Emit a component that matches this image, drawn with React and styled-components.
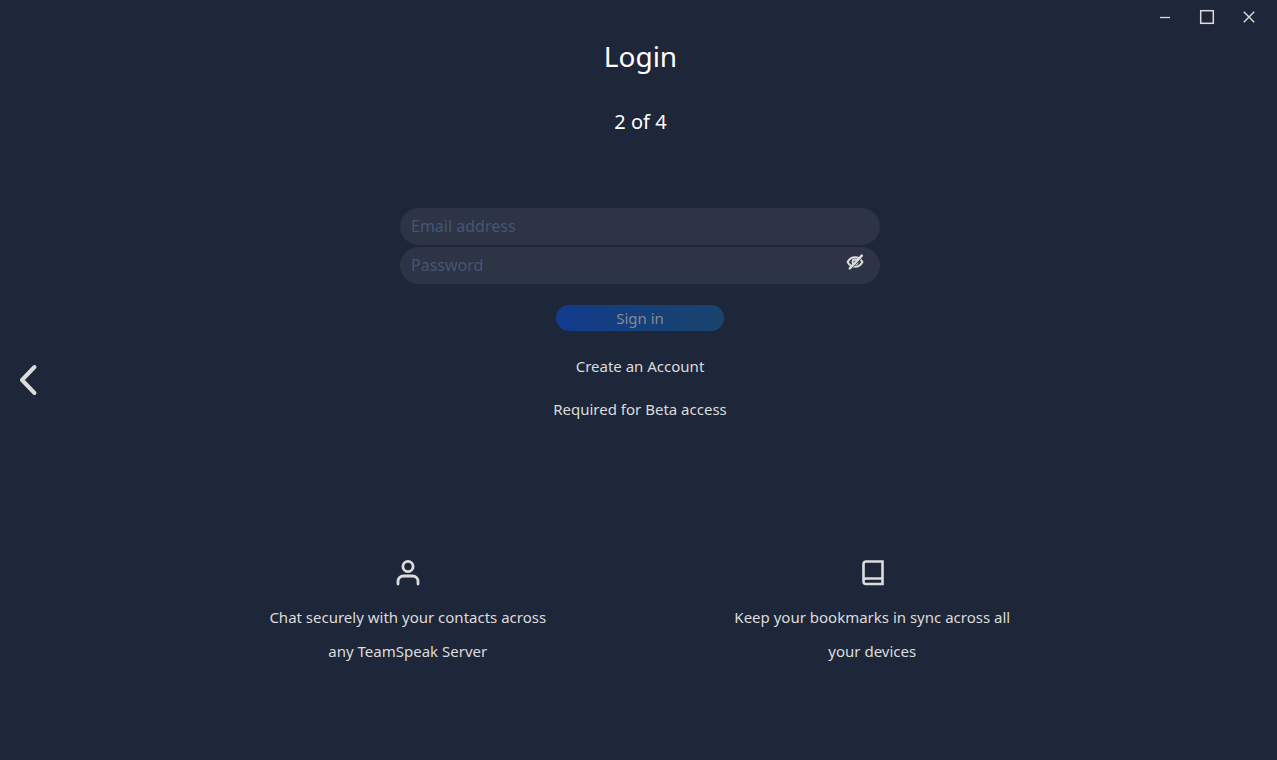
import React, { useState } from 'react';
import styled, { createGlobalStyle } from 'styled-components';

const GlobalStyle = createGlobalStyle`
    * {
        box-sizing: border-box;
    }
    body {
        margin: 0;
        background: #1e2639;
        color: #dcdcdc;
        font-family: "Noto Sans", sans-serif;
    }
    button, input {
        font-family: inherit;
    }
`;

const WindowControls = () => (
    <TitleBar>
        <IconButton aria-label="Minimize">
            <svg width="16" height="16" viewBox="0 0 16 16" fill="none" stroke="currentColor" strokeWidth="1.3">
                <path d="M3 8.5h10" />
            </svg>
        </IconButton>
        <IconButton aria-label="Maximize">
            <svg width="16" height="16" viewBox="0 0 16 16" fill="none" stroke="currentColor" strokeWidth="1.5">
                <rect x="1.7" y="1.7" width="12.6" height="12.6" />
            </svg>
        </IconButton>
        <IconButton aria-label="Close">
            <svg width="16" height="16" viewBox="0 0 16 16" fill="none" stroke="currentColor" strokeWidth="1.4">
                <path d="M2.8 2.8l10.4 10.4M13.2 2.8L2.8 13.2" />
            </svg>
        </IconButton>
    </TitleBar>
);

const LoginForm = () => {
    const [email, setEmail] = useState('');
    const [password, setPassword] = useState('');
    const [showPassword, setShowPassword] = useState(false);

    return (
        <Form onSubmit={e => e.preventDefault()}>
            <Field
                type="email"
                placeholder="Email address"
                aria-label="Email address"
                value={email}
                onChange={e => setEmail(e.target.value)}
            />
            <PasswordRow>
                <Field
                    type={showPassword ? 'text' : 'password'}
                    placeholder="Password"
                    aria-label="Password"
                    value={password}
                    onChange={e => setPassword(e.target.value)}
                />
                <RevealButton type="button" aria-label="Show password" onClick={() => setShowPassword(q => !q)}>
                    <svg width="18" height="16" viewBox="0 0 18 16" fill="none" stroke="currentColor" strokeLinecap="round">
                        <path d="M1.6 8C3.2 5 5.8 3.2 9 3.2S14.8 5 16.4 8C14.8 11 12.2 12.8 9 12.8S3.2 11 1.6 8z" strokeWidth="2" />
                        <circle cx="9" cy="8" r="2.5" strokeWidth="1.8" />
                        <path d="M5.4 15L17 2.7" stroke="#2c3446" strokeWidth="1" />
                        <path d="M3.8 14.4L15.8 1.6" strokeWidth="2.4" />
                    </svg>
                </RevealButton>
            </PasswordRow>
            <SignInButton type="submit">Sign in</SignInButton>
        </Form>
    );
};

const App = () => (
    <>
        <GlobalStyle />
        <Page>
            <WindowControls />
            <Header>
                <Title>Login</Title>
                <Step>2 of 4</Step>
            </Header>
            <Content>
                <BackButton aria-label="Back">
                    <svg width="20" height="32" viewBox="0 0 20 32" fill="none" stroke="currentColor" strokeWidth="4" strokeLinecap="round" strokeLinejoin="round">
                        <path d="M15.5 3L3 16l12.5 13" />
                    </svg>
                </BackButton>
                <LoginForm />
                <AccountLink href="#create">Create an Account</AccountLink>
                <Note>Required for Beta access</Note>
            </Content>
            <Features>
                <Feature>
                    <svg width="28" height="28" viewBox="0 0 28 28" fill="none" stroke="currentColor" strokeWidth="2.8" strokeLinecap="round">
                        <circle cx="14" cy="7.5" r="5.1" />
                        <path d="M4 25v-2.500a5.500 5.500 0 0 1 5.500-5.500h9a5.500 5.500 0 0 1 5.500 5.500V25" />
                    </svg>
                    <FeatureText>Chat securely with your contacts across any TeamSpeak Server</FeatureText>
                </Feature>
                <Feature>
                    <svg width="28" height="28" viewBox="0 0 28 28" fill="none" stroke="currentColor" strokeWidth="2.6">
                        <path d="M24.5 2.500H8a2.500 2.500 0 0 0-2.500 2.500v17.500a2.500 2.500 0 0 0 2.500 2.500h16.500zM5.500 22a2.500 2.500 0 0 1 2.500-2.500h16.500" />
                    </svg>
                    <FeatureText>Keep your bookmarks in sync across all your devices</FeatureText>
                </Feature>
            </Features>
        </Page>
    </>
);

const Page = styled.div`
    min-height: 100vh;
    display: flex;
    flex-direction: column;
`;

const TitleBar = styled.div`
    height: 34px;
    padding-right: 20px;
    display: flex;
    justify-content: flex-end;
    align-items: center;
    gap: 26px;
`;

const IconButton = styled.button`
    display: flex;
    padding: 0;
    border: 0;
    background: none;
    color: #dcdcdc;
    cursor: pointer;
`;

const Header = styled.header`
    display: flex;
    flex-direction: column;
    align-items: center;
    gap: 28px;
    padding-left: 4px;
    color: #ffffff;
`;

const Title = styled.h1`
    margin: 0;
    font-size: 28px;
    line-height: 44px;
    font-weight: 400;
`;

const Step = styled.p`
    margin: 0;
    font-size: 20px;
    line-height: 32px;
`;

const Content = styled.main`
    position: relative;
    display: flex;
    flex-direction: column;
    align-items: center;
    margin-top: 70px;
    padding-left: 3px;
`;

const BackButton = styled(IconButton)`
    position: absolute;
    left: 19px;
    top: 156px;
`;

const Form = styled.form`
    width: 100%;
    max-width: 480px;
    display: flex;
    flex-direction: column;
    align-items: center;
    gap: 2px;
`;

const Field = styled.input`
    display: block;
    width: 100%;
    height: 37px;
    padding: 0 11px 2px;
    border: 0;
    border-radius: 19px;
    outline: none;
    background: #2c3446;
    color: #dcdcdc;
    font-size: 16px;
    &::placeholder {
        color: #465573;
        opacity: 1;
    }
`;

const PasswordRow = styled.div`
    position: relative;
    width: 100%;
`;

const RevealButton = styled(IconButton)`
    position: absolute;
    right: 16px;
    top: 7px;
`;

const SignInButton = styled.button`
    width: 168px;
    height: 26px;
    margin-top: 19px;
    padding: 0;
    border: 0;
    border-radius: 13px;
    background: linear-gradient(90deg, #113b8d, #154078 55%, #1a446e);
    color: #868b91;
    font-size: 15px;
    line-height: 26px;
    cursor: pointer;
`;

const AccountLink = styled.a`
    margin-top: 23px;
    color: inherit;
    font-size: 15px;
    line-height: 24px;
    text-decoration: none;
`;

const Note = styled.p`
    margin: 19px 0 0;
    font-size: 15px;
    line-height: 24px;
`;

const Features = styled.section`
    display: grid;
    grid-template-columns: 1fr 1fr;
    width: 100%;
    max-width: 932px;
    margin: 138px auto 0;
    padding-left: 3px;
`;

const Feature = styled.div`
    display: flex;
    flex-direction: column;
    align-items: center;
    gap: 13px;
`;

const FeatureText = styled.p`
    max-width: 290px;
    margin: 0;
    font-size: 15px;
    line-height: 34px;
    text-align: center;
`;

export default App;
